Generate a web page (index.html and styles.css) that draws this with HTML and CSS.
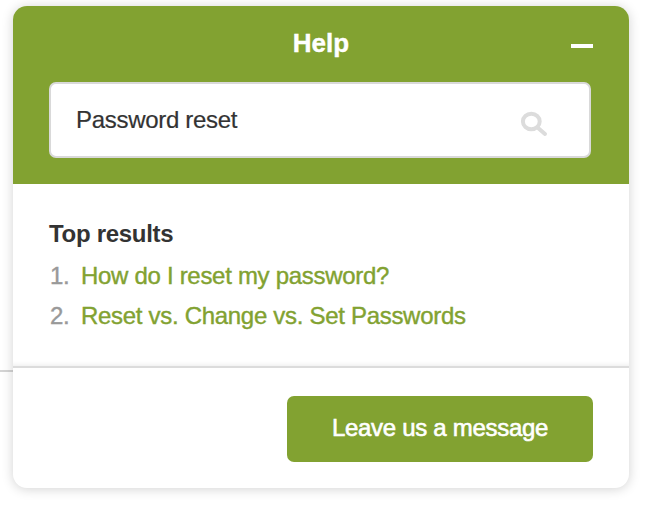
FILE: index.html
```
<!DOCTYPE html>
<html lang="en">
<head>
    <meta charset="UTF-8">
    <meta name="viewport" content="width=device-width, initial-scale=1.0">
    <title>Help</title>
    <link rel="stylesheet" href="styles.css">
</head>
<body>
    <div class="widget">
        <header class="widget-header">
            <div class="title-bar">
                <h1>Help</h1>
                <button class="minimize-btn" aria-label="Minimize"></button>
            </div>
            <div class="search-box">
                <input type="text" class="search-input" value="Password reset" aria-label="Search">
                <svg class="search-icon" width="28" height="26" viewBox="0 0 28 26">
                    <ellipse cx="11.3" cy="10.5" rx="8.4" ry="7.7" />
                    <path d="M17.5 16.5 L25 23" />
                </svg>
            </div>
        </header>

        <div class="results">
            <h2>Top results</h2>
            <ol class="result-list">
                <li><a href="#">How do I reset my password?</a></li>
                <li><a href="#">Reset vs. Change vs. Set Passwords</a></li>
            </ol>
        </div>

        <footer class="widget-footer">
            <button class="message-btn">Leave us a message</button>
        </footer>
    </div>
</body>
</html>
```
FILE: styles.css
```
* {
    box-sizing: border-box;
}

body {
    margin: 0;
    padding: 6px 25px 25px 13px;
    height: 513px;
    overflow: hidden;
    /* rule of the page behind the widget */
    background: linear-gradient(#d4d4d4, #d4d4d4) 0 370px / 13px 2px no-repeat #fff;
    font-family: "Liberation Sans", Arial, sans-serif;
    font-size: 24px;
    letter-spacing: -0.3px;
    color: #333;
}

.widget {
    display: flex;
    flex-direction: column;
    height: 482px;
    border-radius: 14px;
    background: #fff;
    box-shadow: 0 1px 12px rgba(0, 0, 0, 0.18);
    overflow: hidden;
}

.widget-header {
    height: 178px;
    padding: 19px 36px 0;
    background: #82a231;
}

.title-bar {
    display: grid;
    grid-template-columns: 22px 1fr 22px;
    align-items: center;
    height: 36px;
    margin-bottom: 21px;
}

h1 {
    grid-column: 2;
    margin: 0;
    font-size: 26px;
    line-height: 36px;
    letter-spacing: 0;
    text-align: center;
    color: #fff;
    -webkit-text-stroke: 0.4px #fff;
}

.minimize-btn {
    width: 22px;
    height: 4px;
    margin-top: 6px;
    padding: 0;
    border: none;
    background: #fff;
}

.search-box {
    display: flex;
    align-items: center;
    width: 542px;
    height: 76px;
    padding: 0 41px 0 25px;
    border: 2px solid #d9d9d9;
    border-radius: 7px;
    background: #fff;
}

.search-input {
    flex: 1;
    min-width: 0;
    padding: 0;
    border: none;
    outline: none;
    background: none;
    font: inherit;
    letter-spacing: inherit;
    color: #333;
    -webkit-text-stroke: 0.2px #333;
}

.search-icon {
    margin-top: 8px;
    fill: none;
    stroke: #dcdcdc;
    stroke-width: 4;
    stroke-linecap: round;
}

.results {
    height: 182px;
    padding: 30px 36px 0;
    box-shadow: inset 0 -5px 5px -4px rgba(0, 0, 0, 0.08);
}

h2 {
    margin: 0 0 2px;
    font-size: 24px;
    line-height: 40px;
}

.result-list {
    margin: 0;
    padding: 0;
    list-style: none;
    counter-reset: result;
}

.result-list li {
    display: flex;
    line-height: 40px;
    counter-increment: result;
}

.result-list li::before {
    content: counter(result) ".";
    width: 31px;
    padding-left: 1px;
    color: #999;
    -webkit-text-stroke: 0.4px #999;
}

.result-list a {
    color: #82a231;
    text-decoration: none;
    -webkit-text-stroke: 0.4px #82a231;
}

.widget-footer {
    flex: 1;
    display: flex;
    justify-content: flex-end;
    align-items: flex-start;
    padding: 28px 36px 0;
    border-top: 2px solid #dcdcdc;
}

.message-btn {
    width: 306px;
    height: 66px;
    padding: 0 0 2px;
    border: none;
    border-radius: 7px;
    background: #82a231;
    font: inherit;
    letter-spacing: inherit;
    color: #fff;
    -webkit-text-stroke: 0.6px #fff;
}
```
